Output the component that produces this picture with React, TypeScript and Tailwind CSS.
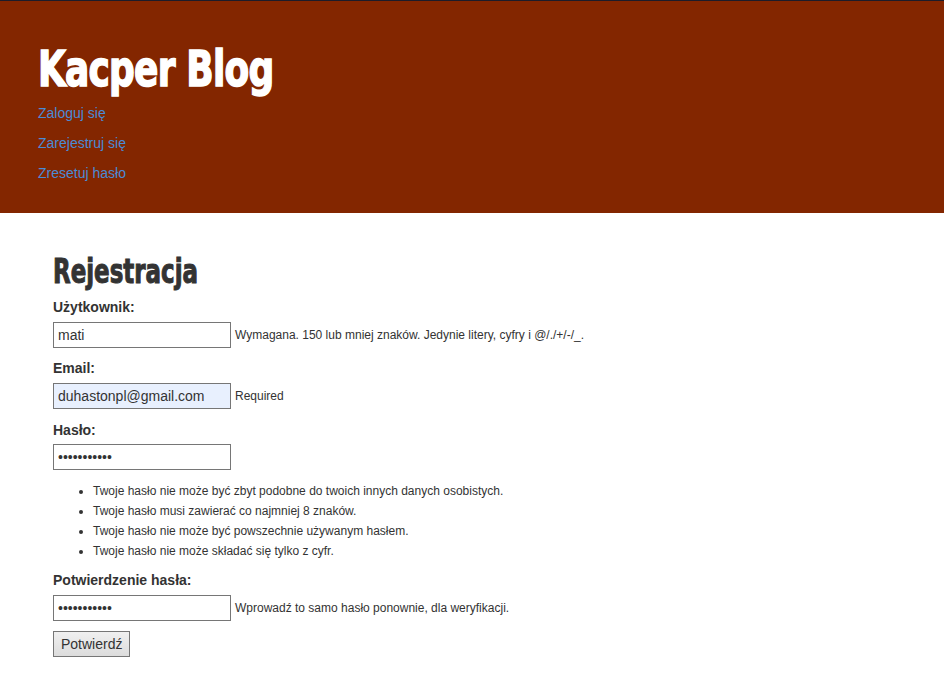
import React from "react";

const titleFont = {
  fontFamily: 'Impact, "Liberation Sans Narrow", "DejaVu Sans Condensed", "Liberation Sans", sans-serif',
};

export default function App() {
  const rules = [
    "Twoje hasło nie może być zbyt podobne do twoich innych danych osobistych.",
    "Twoje hasło musi zawierać co najmniej 8 znaków.",
    "Twoje hasło nie może być powszechnie używanym hasłem.",
    "Twoje hasło nie może składać się tylko z cyfr.",
  ];

  return (
    <div className="min-h-[685px] bg-white text-[#333] font-['Liberation_Sans',Arial,sans-serif]">
      {/* header */}
      <header className="bg-[#832600] border-t border-[#1c1c2a] h-[213px] px-[38px] pt-[40px]">
        <h1
          className="text-white text-[50px] leading-[56px] font-bold tracking-[-1px] [transform:scaleX(0.8)] origin-left [-webkit-text-stroke:1.5px_white]"
          style={titleFont}
        >
          Kacper Blog
        </h1>
        <nav className="mt-[1px] flex flex-col text-[14px] leading-[30px] text-[#4a8bd6]">
          <a href="#">Zaloguj się</a>
          <a href="#">Zarejestruj się</a>
          <a href="#">Zresetuj hasło</a>
        </nav>
      </header>

      {/* form */}
      <main className="px-[53px] pt-[38px]">
        <h2
          className="text-[34px] leading-[40px] font-bold text-[#333] [transform:scaleX(0.75)] origin-left [-webkit-text-stroke:1px_#333]"
          style={titleFont}
        >
          Rejestracja
        </h2>
        <form className="text-[14px]">
          <label className="block font-bold mt-[6px] leading-[20px]">Użytkownik:</label>
          <div className="flex items-center mt-[5px]">
            <input
              type="text"
              defaultValue="mati"
              className="w-[178px] h-[26px] border border-[#767676] px-[4px] text-[14px] outline-none"
            />
            <span className="ml-[4px] text-[12px] text-[#333]">
              Wymagana. 150 lub mniej znaków. Jedynie litery, cyfry i @/./+/-/_.
            </span>
          </div>

          <label className="block font-bold mt-[10px] leading-[20px]">Email:</label>
          <div className="flex items-center mt-[5px]">
            <input
              type="email"
              defaultValue="duhastonpl@gmail.com"
              className="w-[178px] h-[26px] border border-[#767676] bg-[#e8f0fe] px-[4px] text-[14px] outline-none"
            />
            <span className="ml-[4px] text-[12px] text-[#333]">Required</span>
          </div>

          <label className="block font-bold mt-[11px] leading-[20px]">Hasło:</label>
          <div className="flex items-center mt-[4px]">
            <input
              type="password"
              defaultValue="abcdefghijk"
              className="w-[178px] h-[26px] border border-[#767676] px-[4px] text-[14px] outline-none"
            />
          </div>
          <ul className="list-disc pl-[40px] mt-[11px] text-[12px] leading-[20px]">
            {rules.map((r) => (
              <li key={r}>{r}</li>
            ))}
          </ul>

          <label className="block font-bold mt-[9px] leading-[20px]">Potwierdzenie hasła:</label>
          <div className="flex items-center mt-[5px]">
            <input
              type="password"
              defaultValue="abcdefghijk"
              className="w-[178px] h-[26px] border border-[#767676] px-[4px] text-[14px] outline-none"
            />
            <span className="ml-[4px] text-[12px] text-[#333]">
              Wprowadź to samo hasło ponownie, dla weryfikacji.
            </span>
          </div>

          <button
            type="button"
            className="mt-[10px] h-[26px] px-[7px] border border-[#767676] bg-gradient-to-b from-[#f0f0f0] to-[#dcdcdc] text-[14px] text-[#333]"
          >
            Potwierdź
          </button>
        </form>
      </main>
    </div>
  );
}
